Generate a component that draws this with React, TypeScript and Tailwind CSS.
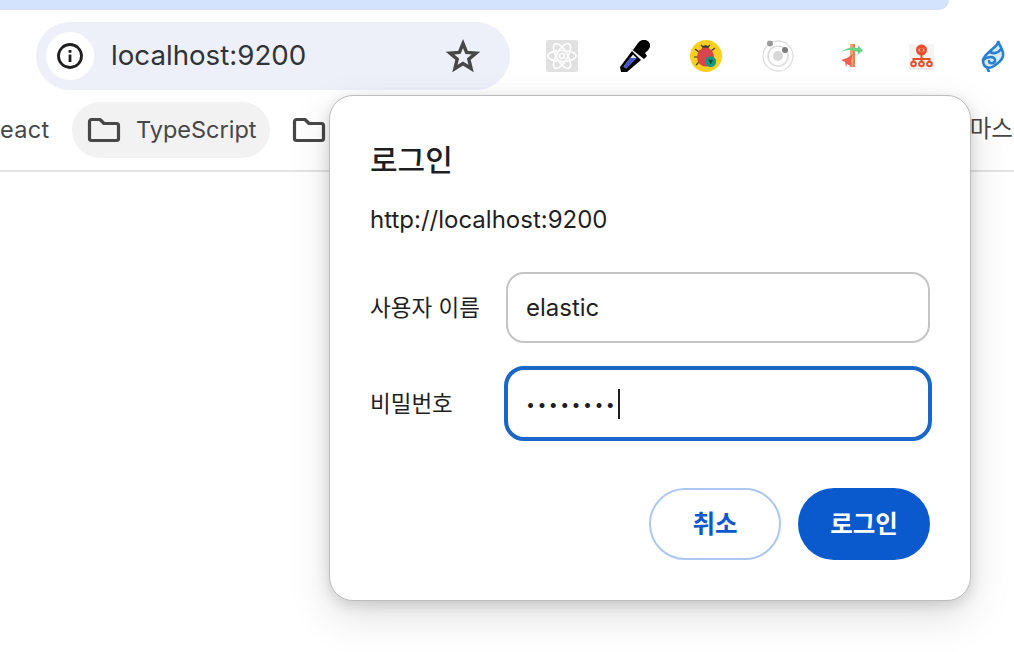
const FONT = "[font-family:Inter,'Noto_Sans_CJK_KR',sans-serif]";

function FolderIcon() {
  return (
    <svg width="34" height="26" viewBox="0 0 34 26" fill="none" stroke="#474747" strokeWidth="3.2" strokeLinejoin="round">
      <path d="M2.5 4.5a2 2 0 0 1 2-2h8.5l4 4h12.5a2 2 0 0 1 2 2v13a2 2 0 0 1-2 2h-25a2 2 0 0 1-2-2z" />
    </svg>
  );
}

function ExtensionIcons() {
  return (
    <div className="ml-[36px] flex items-center gap-[40px]">
      {/* react devtools, greyed out */}
      <svg width="32" height="32" viewBox="0 0 32 32">
        <rect width="32" height="32" rx="2" fill="#e1e1e1" />
        <g fill="none" stroke="#fff" strokeWidth="1.6">
          <ellipse cx="16" cy="16" rx="14" ry="5.5" />
          <ellipse cx="16" cy="16" rx="14" ry="5.5" transform="rotate(60 16 16)" />
          <ellipse cx="16" cy="16" rx="14" ry="5.5" transform="rotate(120 16 16)" />
          <circle cx="16" cy="16" r="2.5" />
        </g>
      </svg>
      {/* dropper */}
      <svg width="32" height="32" viewBox="0 0 32 32">
        <path d="M14 11 L23 20 L9 32 L3 32 L2 27 Z" fill="#000" />
        <path d="M12 8 L15 10 L20 3 Q23 -1 28 0 Q33 2 32 7 Q31 10 27 13 L29 16 L26 19 Z" fill="#000" />
        <path d="M15 14.5 L18.5 18 L8 28.5 L5.5 26.5 Z" fill="#e9e9f6" />
        <path d="M12 18 L18.5 18 L8 28.5 L5.5 26.5 Z" fill="#4457c9" />
      </svg>
      {/* bug with shield */}
      <svg width="32" height="32" viewBox="0 0 32 32">
        <circle cx="16" cy="16" r="16" fill="#fbcf21" />
        <g stroke="#3c3a2e" strokeWidth="1.2" fill="none">
          <path d="M9 12 L5 9 M8 17 H4 M9 22 L6 25 M21 11 L25 8 M13 7 L11 5 M18 7 L20 5" />
        </g>
        <circle cx="15.5" cy="8.5" r="3.2" fill="#3f3a30" />
        <ellipse cx="15.5" cy="17" rx="8.5" ry="9.5" fill="#d8454c" />
        <circle cx="20.7" cy="21.7" r="5.5" fill="#0d9b83" />
        <path d="M18.2 19.7h5l-2.5 4.5z" fill="#08463c" />
      </svg>
      {/* grey orbit */}
      <svg width="32" height="32" viewBox="0 0 32 32" fill="none">
        <circle cx="16" cy="16" r="15" stroke="#dedede" strokeWidth="1.3" />
        <circle cx="16" cy="16" r="10" stroke="#dedede" strokeWidth="1.6" />
        <circle cx="16" cy="16" r="5" fill="#d8d8d8" />
        <circle cx="8" cy="3.5" r="3" fill="#9a9a9a" />
        <circle cx="23" cy="10" r="3" fill="#7c7c7c" />
      </svg>
      {/* bamboo */}
      <svg width="32" height="32" viewBox="0 0 32 32">
        <rect x="16" y="4" width="5" height="23" fill="#f0a577" />
        <rect x="19" y="4" width="2" height="23" fill="#e8824f" />
        <path d="M7 12 Q14 6 24 8 L23.5 5 L29 10.5 L23.5 15 L24 12 Q14 8 7 12Z" fill="#66d689" />
        <path d="M7 20 L13 18 L19 14 L17 20 L18 27 L13 24 L12 27 L11 22Z" fill="#ee5f4e" />
      </svg>
      {/* sitemap */}
      <svg width="32" height="32" viewBox="0 0 32 32">
        <rect x="3" y="4" width="25" height="25.5" rx="2" fill="#dcdcdc" />
        <rect x="3" y="4" width="25" height="24.5" rx="2" fill="#f4f4f4" />
        <g fill="none" stroke="#ea4f2b" strokeWidth="2">
          <circle cx="15.5" cy="10" r="4.5" fill="#ea4f2b" />
          <path d="M15.5 14v5M7.5 22v-3h16v3M15.5 19v3" />
          <circle cx="7.5" cy="24" r="2.3" />
          <circle cx="15.5" cy="24" r="2.3" />
          <circle cx="23.5" cy="24" r="2.3" />
        </g>
        <path d="M14 8.5 L12.8 10 L14 11.5 M17 8.5 L18.2 10 L17 11.5" fill="none" stroke="#fff" strokeWidth="0.9" />
      </svg>
      {/* blue swirl */}
      <svg width="32" height="32" viewBox="0 0 32 32" fill="none" stroke="#2a80cf" strokeWidth="2.6" strokeLinecap="round">
        <path d="M20 1 C21 5 15 8 10 13 C5 17 4 21 6 25 C8 29 13 28 16 26 C20 23 24 21 25 16 C26 10 22 7 20 1Z" fill="#a8d3f3" fillOpacity="0.45" />
        <path d="M5 20 C11 15 18 17 17 21 C16 24 11 24 11 21" />
        <path d="M12 12 C16 14 20 13 23 9" />
        <path d="M9 27 L11 32" />
      </svg>
    </div>
  );
}

function Toolbar() {
  return (
    <div className="flex h-[80px] items-center pl-[36px]">
      <div className="flex h-[68px] w-[474px] items-center rounded-full bg-[#edf0f8] pl-[10px] pr-[30px]">
        <div className="flex h-[48px] w-[48px] items-center justify-center rounded-full bg-white">
          <svg width="28" height="28" viewBox="0 0 28 28" fill="none">
            <circle cx="14" cy="14" r="11.5" stroke="#1f1f1f" strokeWidth="2.8" />
            <rect x="12.6" y="12.5" width="2.8" height="7.5" fill="#1f1f1f" />
            <rect x="12.6" y="8" width="2.8" height="2.8" fill="#1f1f1f" />
          </svg>
        </div>
        <span className="ml-[17px] text-[27.7px] text-[#303338]">localhost:9200</span>
        <svg className="ml-auto" width="34" height="34" viewBox="0 0 34 34" fill="none">
          <path d="M17 4.5 L20.6 13.4 L30 14.1 L22.8 20.2 L25.1 29.5 L17 24.5 L8.9 29.5 L11.2 20.2 L4 14.1 L13.4 13.4 Z" stroke="#474747" strokeWidth="3.4" strokeLinejoin="miter" />
        </svg>
      </div>
      <ExtensionIcons />
    </div>
  );
}

function BookmarkBar() {
  return (
    <div className="flex h-[76px] items-start overflow-hidden border-b-2 border-[#e3e3e3] pt-[6px]">
      <span className="ml-[-15px] mt-[12px] w-[65px] shrink-0 text-[23.5px] leading-[32px] tracking-[0.3px] text-[#474747]">React</span>
      <div className="ml-[22px] flex h-[56px] w-[198px] shrink-0 items-center rounded-full bg-[#f2f2f2] pl-[15px]">
        <FolderIcon />
        <span className="ml-[15px] text-[23.5px] text-[#474747]">TypeScript</span>
      </div>
      <div className="ml-[22px] mt-[15px] shrink-0">
        <FolderIcon />
      </div>
      <span className="ml-auto mr-[1px] mt-[11px] shrink-0 text-[23.5px] leading-[32px] text-[#474747]">마스</span>
    </div>
  );
}

function LoginDialog() {
  return (
    <div className="absolute left-[329px] top-[95px] h-[506px] w-[642px] rounded-[24px] border border-[#bdbdbd] bg-white px-[40px] pt-[45px] shadow-[0_4px_14px_rgba(0,0,0,0.14),0_16px_44px_rgba(0,0,0,0.12)]">
      <h1 className="text-[30px] font-medium leading-[38px] text-[#1f1f1f]">로그인</h1>
      <p className="mt-[24px] text-[24px] leading-[34px] text-[#1f1f1f]">http://localhost:9200</p>

      <div className="mt-[35px] flex items-center">
        <label className="w-[136px] shrink-0 text-[22.5px] text-[#1f1f1f]">사용자 이름</label>
        <div className="flex h-[71px] w-[424px] shrink-0 items-center rounded-[18px] border-2 border-[#c4c4c4] pl-[18px] text-[24px] text-[#1f1f1f]">
          elastic
        </div>
      </div>

      <div className="mt-[23px] flex items-center">
        <label className="w-[134px] shrink-0 text-[22.5px] text-[#1f1f1f]">비밀번호</label>
        <div className="flex h-[75px] w-[428px] shrink-0 items-center rounded-[20px] border-[4px] border-[#1a66c9] pl-[18px] text-[#1f1f1f]">
          <span className="text-[16px] tracking-[2.4px]">••••••••</span>
          <span className="ml-[1px] h-[30px] w-[2px] bg-[#1f1f1f]" />
        </div>
      </div>

      <div className="mt-[47px] flex justify-end gap-[17px]">
        <button className="h-[72px] w-[132px] rounded-full border-2 border-[#abc8f0] bg-white text-[24.5px] font-semibold text-[#0b5acd]">
          취소
        </button>
        <button className="h-[72px] w-[132px] rounded-full bg-[#0b5acd] text-[24.5px] font-semibold text-white">
          로그인
        </button>
      </div>
    </div>
  );
}

export default function App() {
  return (
    <div className={`relative h-[652px] w-[1014px] overflow-hidden bg-white ${FONT}`}>
      <div className="h-[10px] w-[949px] rounded-br-[16px] bg-[#d3e3fd]" />
      <div className="h-[6px]" />
      <Toolbar />
      <BookmarkBar />
      <LoginDialog />
    </div>
  );
}
